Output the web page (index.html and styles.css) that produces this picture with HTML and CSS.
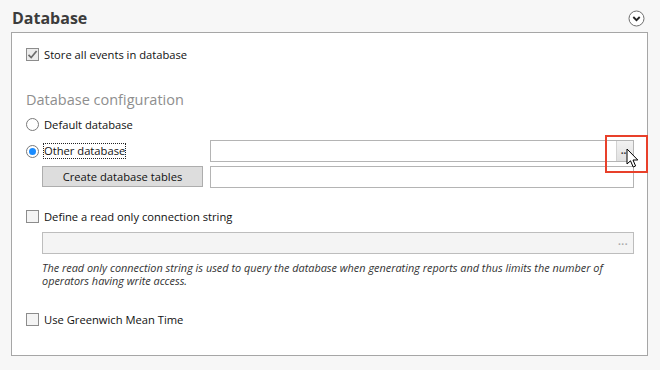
FILE: index.html
```html
<!DOCTYPE html>
<html lang="en">
<head>
  <meta charset="UTF-8" />
  <title>Database</title>
  <link rel="stylesheet" href="styles.css">
</head>
<body>
  <!-- Section header -->
  <div class="section-head">
    <h2>Database</h2>
    <span class="collapse">
      <svg width="17" height="17" viewBox="0 0 17 17">
        <circle cx="8.5" cy="8.5" r="7.5" fill="#fff" stroke="#6e6e6e" stroke-width="1"/>
        <path d="M5.3 7 L8.5 10.2 L11.7 7" fill="none" stroke="#222" stroke-width="1.8"/>
      </svg>
    </span>
  </div>

  <div class="panel">
    <label class="check-row first">
      <span class="box checked">
        <svg width="11" height="11" viewBox="0 0 11 11">
          <path d="M1.5 5.8 L4.2 8.5 L9.6 2" fill="none" stroke="#6b6b6b" stroke-width="1.7"/>
        </svg>
      </span>
      Store all events in database
    </label>

    <div class="group-title">Database configuration</div>

    <label class="radio-row">
      <span class="radio"></span>
      Default database
    </label>

    <div class="db-grid">
      <label class="radio-row other">
        <span class="radio on"></span>
        <span class="focus">Other database</span>
      </label>
      <div class="field">
        <span class="browse">...</span>
      </div>
      <button class="btn">Create database tables</button>
      <div class="field"></div>
    </div>

    <label class="check-row readonly">
      <span class="box"></span>
      Define a read only connection string
    </label>

    <div class="field disabled">
      <span class="browse-off">...</span>
    </div>
    <p class="hint">The read only connection string is used to query the database when generating reports and thus limits the number of operators having write access.</p>

    <label class="check-row gmt">
      <span class="box"></span>
      Use Greenwich Mean Time
    </label>

    <!-- highlight around the browse button -->
    <div class="callout"></div>
    <svg class="cursor" width="14" height="22" viewBox="0 0 14 22">
      <path d="M1 1 L1 16 L4.5 12.8 L7.2 19 L9.6 18 L7 12 L11.8 12 Z" fill="#fff" stroke="#000" stroke-width="1"/>
    </svg>
  </div>
</body>
</html>
```

FILE: styles.css
```css
body {
  margin: 0;
  background: #f7f7f7;
  font-family: "Open Sans", "Noto Sans", sans-serif;
  font-size: 11.2px;
  color: #111;
  width: 660px;
  height: 370px;
  overflow: hidden;
}

.section-head {
  display: flex;
  align-items: center;
  justify-content: space-between;
  height: 32px;
  padding: 0 15px 0 12px;
  box-sizing: border-box;
}

.section-head h2 {
  margin: 3px 0 0;
  font-size: 16px;
  font-weight: bold;
  color: #3c3c3c;
}

.collapse {
  display: flex;
  margin-top: 4px;
}

.panel {
  position: relative;
  margin-left: 11px;
  width: 637px;
  height: 324px;
  box-sizing: border-box;
  background: #fff;
  border: 1px solid #a6a6a6;
  padding: 14px 13px 0 14px;
}

.check-row,
.radio-row {
  display: flex;
  align-items: center;
  height: 15px;
  white-space: nowrap;
}

.box {
  display: inline-flex;
  align-items: center;
  justify-content: center;
  width: 11px;
  height: 11px;
  border: 1px solid #8c8c8c;
  background: #f4f4f4;
  margin-right: 5px;
}

.box.checked {
  background: #ececec;
}

.group-title {
  margin-top: 27px;
  font-size: 14.5px;
  color: #8e8e8e;
  height: 22px;
  line-height: 22px;
}

.radio-row {
  margin-top: 6px;
}

.radio {
  width: 11px;
  height: 11px;
  border: 1px solid #7a7a7a;
  border-radius: 50%;
  background: #fff;
  margin-right: 5px;
  position: relative;
}

.radio.on::after {
  content: "";
  position: absolute;
  left: 2px;
  top: 2px;
  width: 7px;
  height: 7px;
  border-radius: 50%;
  background: #1a8cff;
}

.db-grid {
  display: grid;
  grid-template-columns: 177px 1fr;
  column-gap: 7px;
  row-gap: 4px;
  margin-top: 8px;
}

.other {
  margin-top: 0;
  align-self: center;
}

.focus {
  outline: 1px dotted #222;
  outline-offset: 0;
  line-height: 14px;
}

.field {
  height: 22px;
  box-sizing: border-box;
  border: 1px solid #b4b4b4;
  background: #fff;
  display: flex;
  justify-content: flex-end;
}

.browse {
  width: 16px;
  height: 20px;
  background: linear-gradient(#f2f2f2, #e0e0e0);
  border-left: 1px solid #d2d2d2;
  color: #333;
  font-size: 10px;
  font-weight: bold;
  line-height: 18px;
  text-align: center;
  overflow: hidden;
}

.btn {
  margin: 0 0 0 16px;
  height: 21px;
  padding: 0;
  font-family: inherit;
  font-size: 11.2px;
  color: #111;
  background: #dddddd;
  border: 1px solid #adadad;
}

.readonly {
  margin-top: 21px;
}

.field.disabled {
  margin: 8px 0 0 16px;
  background: #f4f4f4;
  border-color: #bdbdbd;
  align-items: center;
  padding: 0 5px 4px 0;
}

.browse-off {
  color: #a8a8a8;
  font-size: 10px;
  font-weight: bold;
  letter-spacing: 0.5px;
}

.hint {
  margin: 7px 0 0 16px;
  font-style: italic;
  font-size: 10.9px;
  line-height: 13px;
  color: #333;
  width: 575px;
}

.gmt {
  margin-top: 25px;
}

.callout {
  position: absolute;
  left: 593px;
  top: 102px;
  border: 2px solid #e8402a;
  box-sizing: border-box;
  width: 43px;
  height: 38px;
}

.cursor {
  position: absolute;
  left: 614px;
  top: 115px;
}
```
